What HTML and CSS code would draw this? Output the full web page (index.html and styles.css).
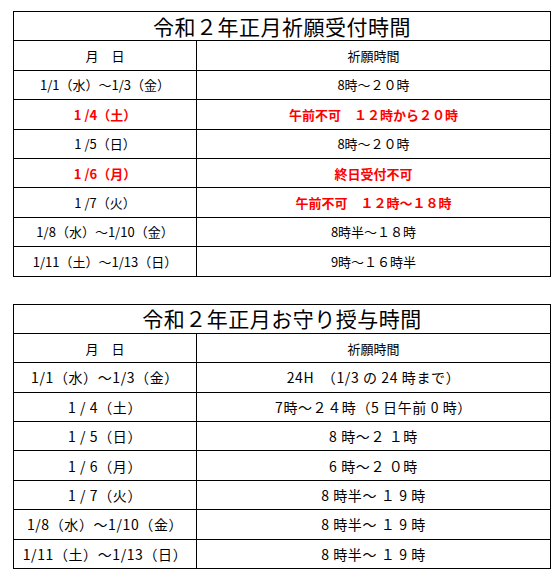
FILE: index.html
```html
<!DOCTYPE html>
<html lang="ja">
<head>
<meta charset="utf-8">
<link rel="stylesheet" href="styles.css">
</head>
<body>
<div class="page">
  <table class="sched">
    <colgroup><col class="c1"><col class="c2"></colgroup>
    <tr><th colspan="2" class="title">令和２年正月祈願受付時間</th></tr>
    <tr><td>月　日</td><td>祈願時間</td></tr>
    <tr><td>1/1（水）～1/3（金）</td><td>8時～２０時</td></tr>
    <tr class="red"><td>1 /4（土）</td><td>午前不可　１２時から２０時</td></tr>
    <tr><td>1 /5（日）</td><td>8時～２０時</td></tr>
    <tr class="red"><td>1 /6（月）</td><td>終日受付不可</td></tr>
    <tr><td>1 /7（火）</td><td class="redcell">午前不可　１２時～１８時</td></tr>
    <tr><td>1/8（水）～1/10（金）</td><td>8時半～１８時</td></tr>
    <tr><td>1/11（土）～1/13（日）</td><td>9時～１６時半</td></tr>
  </table>

  <table class="sched second">
    <colgroup><col class="c1"><col class="c2"></colgroup>
    <tr><th colspan="2" class="title">令和２年正月お守り授与時間</th></tr>
    <tr><td class="hd">月　日</td><td class="hd">祈願時間</td></tr>
    <tr><td>1/1（水）～1/3（金）</td><td>24H　（1/3 の 24 時まで）</td></tr>
    <tr><td>1 / 4（土）</td><td>7時～２４時（5 日午前 0 時）</td></tr>
    <tr><td>1 / 5（日）</td><td>8 時～２ １時</td></tr>
    <tr><td>1 / 6（月）</td><td>6 時～２ ０時</td></tr>
    <tr><td>1 / 7（火）</td><td>8 時半～ １ 9 時</td></tr>
    <tr><td>1/8（水）～1/10（金）</td><td>8 時半～ １ 9 時</td></tr>
    <tr><td>1/11（土）～1/13（日）</td><td>8 時半～ １ 9 時</td></tr>
  </table>
</div>
</body>
</html>
```

FILE: styles.css
```css
html, body {
  margin: 0;
  padding: 0;
  background: #ffffff;
}

.page {
  padding: 11px 0 0 13px;
  display: flex;
  flex-direction: column;
  gap: 27px;
  font-family: "Noto Sans CJK JP", "DejaVu Sans", sans-serif;
  color: #000;
}

.sched {
  border-collapse: collapse;
  table-layout: fixed;
  width: 537px;
}

.sched .c1 { width: 183px; }
.sched .c2 { width: 354px; }

.sched th,
.sched td {
  border: 1px solid #000;
  height: 28.4px;
  padding: 0;
  text-align: center;
  vertical-align: middle;
  font-size: 13px;
  font-weight: 400;
  line-height: 1;
  white-space: nowrap;
}

.sched th.title {
  font-size: 21px;
  font-weight: 400;
  letter-spacing: 0.5px;
}

.sched .red td,
.sched td.redcell {
  color: #ff0000;
  font-weight: 700;
}

.second td {
  font-size: 14px;
  letter-spacing: 0.6px;
}

.second td.hd {
  font-size: 13px;
  letter-spacing: 0;
}
```
